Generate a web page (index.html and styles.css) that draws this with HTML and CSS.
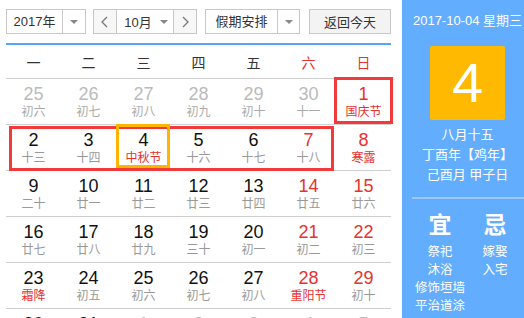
FILE: index.html
```html
<!DOCTYPE html>
<html lang="zh-CN">
<head>
<meta charset="utf-8">
<title>万年历</title>
<link rel="stylesheet" href="styles.css">
</head>
<body>
<div class="page">
  <div class="cal">
    <div class="toolbar">
      <div class="select year">
        <span class="sel-text">2017年</span>
        <span class="sel-arrow"><i class="tri"></i></span>
      </div>
      <div class="monthbox">
        <span class="nav"><svg width="7" height="12" viewBox="0 0 7 12"><polyline points="6,1 1,6 6,11" fill="none" stroke="#777" stroke-width="1.3"/></svg></span>
        <span class="month"><span>10月</span><i class="tri"></i></span>
        <span class="nav"><svg width="7" height="12" viewBox="0 0 7 12"><polyline points="1,1 6,6 1,11" fill="none" stroke="#777" stroke-width="1.3"/></svg></span>
      </div>
      <div class="select holiday">
        <span class="sel-text">假期安排</span>
        <span class="sel-arrow"><i class="tri"></i></span>
      </div>
      <div class="btn-today">返回今天</div>
    </div>
    <div class="rule"></div>
    <div class="weekhead">
      <span>一</span><span>二</span><span>三</span><span>四</span><span>五</span><span class="red">六</span><span class="red">日</span>
    </div>
    <div class="grid">
      <div class="cell other"><b>25</b><em>初六</em></div>
      <div class="cell other"><b>26</b><em>初七</em></div>
      <div class="cell other"><b>27</b><em>初八</em></div>
      <div class="cell other"><b>28</b><em>初九</em></div>
      <div class="cell other"><b>29</b><em>初十</em></div>
      <div class="cell other"><b>30</b><em>十一</em></div>
      <div class="cell wk"><b>1</b><em class="fest">国庆节</em></div>

      <div class="cell"><b>2</b><em>十三</em></div>
      <div class="cell"><b>3</b><em>十四</em></div>
      <div class="cell"><b>4</b><em class="fest">中秋节</em></div>
      <div class="cell"><b>5</b><em>十六</em></div>
      <div class="cell"><b>6</b><em>十七</em></div>
      <div class="cell wk"><b>7</b><em>十八</em></div>
      <div class="cell wk"><b>8</b><em class="fest">寒露</em></div>

      <div class="cell"><b>9</b><em>二十</em></div>
      <div class="cell"><b>10</b><em>廿一</em></div>
      <div class="cell"><b>11</b><em>廿二</em></div>
      <div class="cell"><b>12</b><em>廿三</em></div>
      <div class="cell"><b>13</b><em>廿四</em></div>
      <div class="cell wk"><b>14</b><em>廿五</em></div>
      <div class="cell wk"><b>15</b><em>廿六</em></div>

      <div class="cell"><b>16</b><em>廿七</em></div>
      <div class="cell"><b>17</b><em>廿八</em></div>
      <div class="cell"><b>18</b><em>廿九</em></div>
      <div class="cell"><b>19</b><em>三十</em></div>
      <div class="cell"><b>20</b><em>初一</em></div>
      <div class="cell wk"><b>21</b><em>初二</em></div>
      <div class="cell wk"><b>22</b><em>初三</em></div>

      <div class="cell"><b>23</b><em class="fest">霜降</em></div>
      <div class="cell"><b>24</b><em>初五</em></div>
      <div class="cell"><b>25</b><em>初六</em></div>
      <div class="cell"><b>26</b><em>初七</em></div>
      <div class="cell"><b>27</b><em>初八</em></div>
      <div class="cell wk"><b>28</b><em class="fest">重阳节</em></div>
      <div class="cell wk"><b>29</b><em>初十</em></div>

      <div class="cell"><b>30</b><em>十一</em></div>
      <div class="cell"><b>31</b><em>十二</em></div>
      <div class="cell other"><b>1</b><em>十三</em></div>
      <div class="cell other"><b>2</b><em>十四</em></div>
      <div class="cell other"><b>3</b><em>十五</em></div>
      <div class="cell other"><b>4</b><em>十六</em></div>
      <div class="cell other"><b>5</b><em>十七</em></div>

      <div class="mark mark-a"></div>
      <div class="mark mark-b"></div>
      <div class="mark mark-today"></div>
    </div>
  </div>
  <aside class="side">
    <div class="side-date">2017-10-04 星期三</div>
    <div class="bigday">4</div>
    <div class="lunar">
      <div>八月十五</div>
      <div>丁酉年【鸡年】</div>
      <div>己酉月 甲子日</div>
    </div>
    <div class="sep"></div>
    <div class="yiji">
      <div class="col">
        <div class="yj-title">宜</div>
        <div>祭祀</div>
        <div>沐浴</div>
        <div class="wide">修饰垣墙</div>
        <div class="wide">平治道涂</div>
      </div>
      <div class="col">
        <div class="yj-title">忌</div>
        <div>嫁娶</div>
        <div>入宅</div>
      </div>
    </div>
  </aside>
</div>
</body>
</html>
```

FILE: styles.css
```css
* { box-sizing: border-box; }
html, body { margin: 0; padding: 0; }
body {
  width: 524px;
  height: 318px;
  overflow: hidden;
  background: #fff;
  font-family: "Liberation Sans", "Noto Sans CJK SC", sans-serif;
  color: #333;
}
.page { display: flex; height: 318px; }
.cal { width: 385px; margin-left: 6px; margin-right: 11px; flex: none; }

.toolbar { display: flex; height: 25px; margin-top: 9px; font-size: 13px; }
.select, .monthbox, .btn-today {
  border: 1px solid #c8c8c8;
  height: 25px;
  display: flex;
  align-items: stretch;
  background: #fff;
}
.year { width: 80px; }
.year .sel-text { width: 55px; }
.sel-text { display: flex; align-items: center; justify-content: center; line-height: 23px; }
.sel-arrow { flex: 1; border-left: 1px solid #c8c8c8; display: flex; align-items: center; justify-content: center; }
.tri { display: block; width: 0; height: 0; border-left: 4px solid transparent; border-right: 4px solid transparent; border-top: 4px solid #888; }
.monthbox { width: 104px; margin-left: 7px; background: #f7f7f7; }
.nav { width: 22px; display: flex; align-items: center; justify-content: center; }
.month { width: 60px; background: #fff; border-left: 1px solid #c8c8c8; border-right: 1px solid #c8c8c8; display: flex; align-items: center; justify-content: center; gap: 8px; padding-left: 2px; }
.holiday { width: 95px; margin-left: 8px; }
.holiday .sel-text { width: 71px; }
.btn-today { width: 82px; margin-left: 9px; background: #f3f3f3; justify-content: center; align-items: center; }

.rule { height: 2px; background: #55a6fb; margin-top: 9px; }

.weekhead { display: grid; grid-template-columns: repeat(7, 55px); height: 34px; border-bottom: 1px solid #cfcfcf; font-size: 14px; color: #333; }
.weekhead span { display: flex; align-items: center; justify-content: center; }
.red { color: #e8302f; }

.grid { position: relative; display: grid; grid-template-columns: repeat(7, 55px); grid-auto-rows: 46px; }
.cell { border-bottom: 1px solid #cfcfcf; text-align: center; padding-top: 5px; }
.cell b { display: block; font-weight: normal; font-size: 18px; line-height: 20px; color: #111; }
.cell em { display: block; font-style: normal; font-size: 12px; line-height: 16px; color: #999; }
.cell.wk b { color: #e8302f; }
.cell.other b { color: #bbb; }
.cell.other em { color: #aaa; }
.cell em.fest { color: #e8302f; }

.mark { position: absolute; border: 3px solid #f23a3a; pointer-events: none; }
.mark-a { left: 328px; top: -2px; width: 59px; height: 47px; }
.mark-b { left: 3px; top: 47px; width: 325px; height: 45px; }
.mark-today { left: 110px; top: 45px; width: 54px; height: 44px; border-color: #ffb400; }

.side { flex: 1; background: #63adfe; color: #fff; padding-left: 9px; display: flex; flex-direction: column; align-items: center; }
.side-date { margin-top: 13px; font-size: 13px; line-height: 16px; white-space: nowrap; }
.bigday { margin-top: 17px; width: 75px; height: 74px; background: #ffb900; border-radius: 2px; font-size: 56px; line-height: 74px; text-align: center; font-family: "Liberation Sans", sans-serif; }
.lunar { margin-top: 5px; font-size: 13px; line-height: 20px; text-align: center; white-space: nowrap; }
.sep { align-self: stretch; margin-top: 12px; height: 2px; background: rgba(255,255,255,0.35); margin-left: 1px; }
.yiji { display: grid; grid-template-columns: 55px 55px; margin-top: 12px; font-size: 12.5px; line-height: 18px; text-align: center; }
.col .wide { white-space: nowrap; }
.col { display: flex; flex-direction: column; align-items: center; }
.yj-title { font-size: 23px; font-weight: bold; line-height: 28px; margin-bottom: 4px; }
```
